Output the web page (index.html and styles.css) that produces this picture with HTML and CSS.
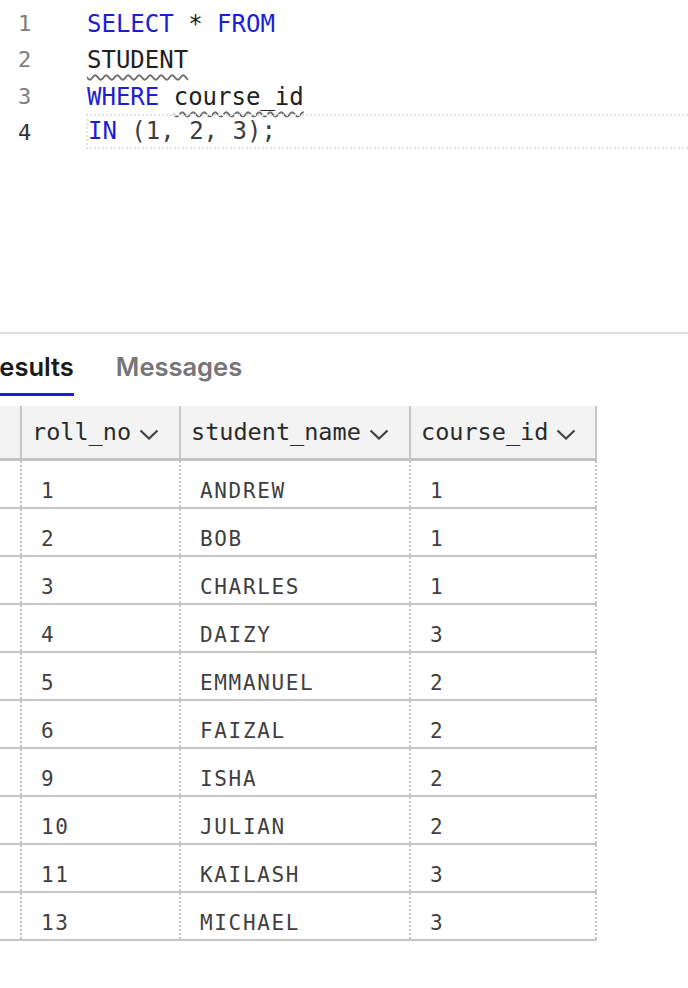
FILE: index.html
```html
<!DOCTYPE html>
<html>
<head>
<meta charset="utf-8">
<link rel="stylesheet" href="styles.css">
</head>
<body>
<div class="editor">
  <div class="line"><span class="ln">1</span><span class="code"><span class="kw">SELECT</span> * <span class="kw">FROM</span></span></div>
  <div class="line"><span class="ln">2</span><span class="code"><span class="squig">STUDENT</span></span></div>
  <div class="line"><span class="ln">3</span><span class="code"><span class="kw">WHERE</span> <span class="squig">course_id</span></span></div>
  <div class="line current"><span class="ln">4</span><span class="code"><span class="kw">IN</span> <span class="lit">(1, 2, 3);</span></span></div>
</div>
<div class="tabs">
  <div class="tab active">Results</div>
  <div class="tab">Messages</div>
</div>
<table class="grid">
  <colgroup>
    <col class="c0"><col class="c1"><col class="c2"><col class="c3">
  </colgroup>
  <thead>
    <tr>
      <th></th>
      <th><span class="hd">roll_no<svg class="chev" viewBox="0 0 20 11"><path d="M1.5 1.5 L10 9.5 L18.5 1.5"/></svg></span></th>
      <th><span class="hd">student_name<svg class="chev" viewBox="0 0 20 11"><path d="M1.5 1.5 L10 9.5 L18.5 1.5"/></svg></span></th>
      <th><span class="hd">course_id<svg class="chev" viewBox="0 0 20 11"><path d="M1.5 1.5 L10 9.5 L18.5 1.5"/></svg></span></th>
    </tr>
  </thead>
  <tbody>
    <tr><td></td><td>1</td><td>ANDREW</td><td>1</td></tr>
    <tr><td></td><td>2</td><td>BOB</td><td>1</td></tr>
    <tr><td></td><td>3</td><td>CHARLES</td><td>1</td></tr>
    <tr><td></td><td>4</td><td>DAIZY</td><td>3</td></tr>
    <tr><td></td><td>5</td><td>EMMANUEL</td><td>2</td></tr>
    <tr><td></td><td>6</td><td>FAIZAL</td><td>2</td></tr>
    <tr><td></td><td>9</td><td>ISHA</td><td>2</td></tr>
    <tr><td></td><td>10</td><td>JULIAN</td><td>2</td></tr>
    <tr><td></td><td>11</td><td>KAILASH</td><td>3</td></tr>
    <tr><td></td><td>13</td><td>MICHAEL</td><td>3</td></tr>
  </tbody>
</table>
</body>
</html>
```
FILE: styles.css
```css
html, body {
  margin: 0;
  padding: 0;
  background: #fff;
  overflow: hidden;
}
body {
  width: 688px;
  height: 988px;
}
.editor {
  height: 334px;
  box-sizing: border-box;
  padding-top: 5.5px;
  border-bottom: 2px solid #dedede;
  font-family: "DejaVu Sans Mono", monospace;
  font-size: 24px;
  color: #222;
}
.line {
  display: flex;
  height: 36.5px;
  line-height: 36.5px;
}
.ln {
  width: 87px;
  flex: none;
  box-sizing: border-box;
  padding-left: 18px;
  color: #7d7d7d;
  font-size: 22px;
}
.current .ln {
  color: #333;
}
.code {
  flex: 1;
  white-space: pre;
}
.current .code {
  box-sizing: border-box;
  margin-left: -1px;
  border: 2px dotted #e2e2e2;
  border-right: none;
  line-height: 31px;
  height: 35px;
  margin-top: -1px;
}
.kw {
  color: #1d1dd6;
}
.lit {
  color: #3d3d3d;
}
.squig {
  text-decoration: underline wavy #6f6f6f;
  text-decoration-thickness: 1.5px;
  text-underline-offset: 6px;
}
.tabs {
  display: flex;
  gap: 42px;
  height: 72px;
  font-family: Inter, "Noto Sans", sans-serif;
  font-size: 25.5px;
  font-weight: 600;
  line-height: 30px;
}
.tab {
  padding-top: 18px;
  padding-bottom: 11px;
  color: #767676;
  align-self: flex-start;
}
.tab.active {
  color: #1a1a1a;
  margin-left: -17px;
  border-bottom: 3px solid #1e1ee0;
}
.grid {
  border-collapse: collapse;
  table-layout: fixed;
  width: 596px;
  font-family: "DejaVu Sans Mono", monospace;
}
.c0 { width: 21px; }
.c1 { width: 159px; }
.c2 { width: 230px; }
.c3 { width: 186px; }
.grid th {
  height: 52px;
  padding: 0 0 0 10px;
  text-align: left;
  font-weight: normal;
  font-size: 23.5px;
  color: #2a2a2a;
  background: #f3f3f3;
  border-right: 2px solid #c6c6c6;
  border-bottom: 3px solid #c2c2c2;
  vertical-align: middle;
  white-space: nowrap;
}
.hd {
  display: inline-flex;
  align-items: center;
}
.chev {
  width: 20px;
  height: 11px;
  margin-left: 8px;
  margin-top: 4px;
  fill: none;
  stroke: #444;
  stroke-width: 2.3;
}
.grid td {
  height: 48px;
  padding: 14px 0 0 19px;
  box-sizing: border-box;
  font-size: 21px;
  letter-spacing: 1.65px;
  color: #3f3f3f;
  border-right: 2px dotted #c4c4c4;
  border-bottom: 2px solid #c6c6c6;
  vertical-align: middle;
}
```
